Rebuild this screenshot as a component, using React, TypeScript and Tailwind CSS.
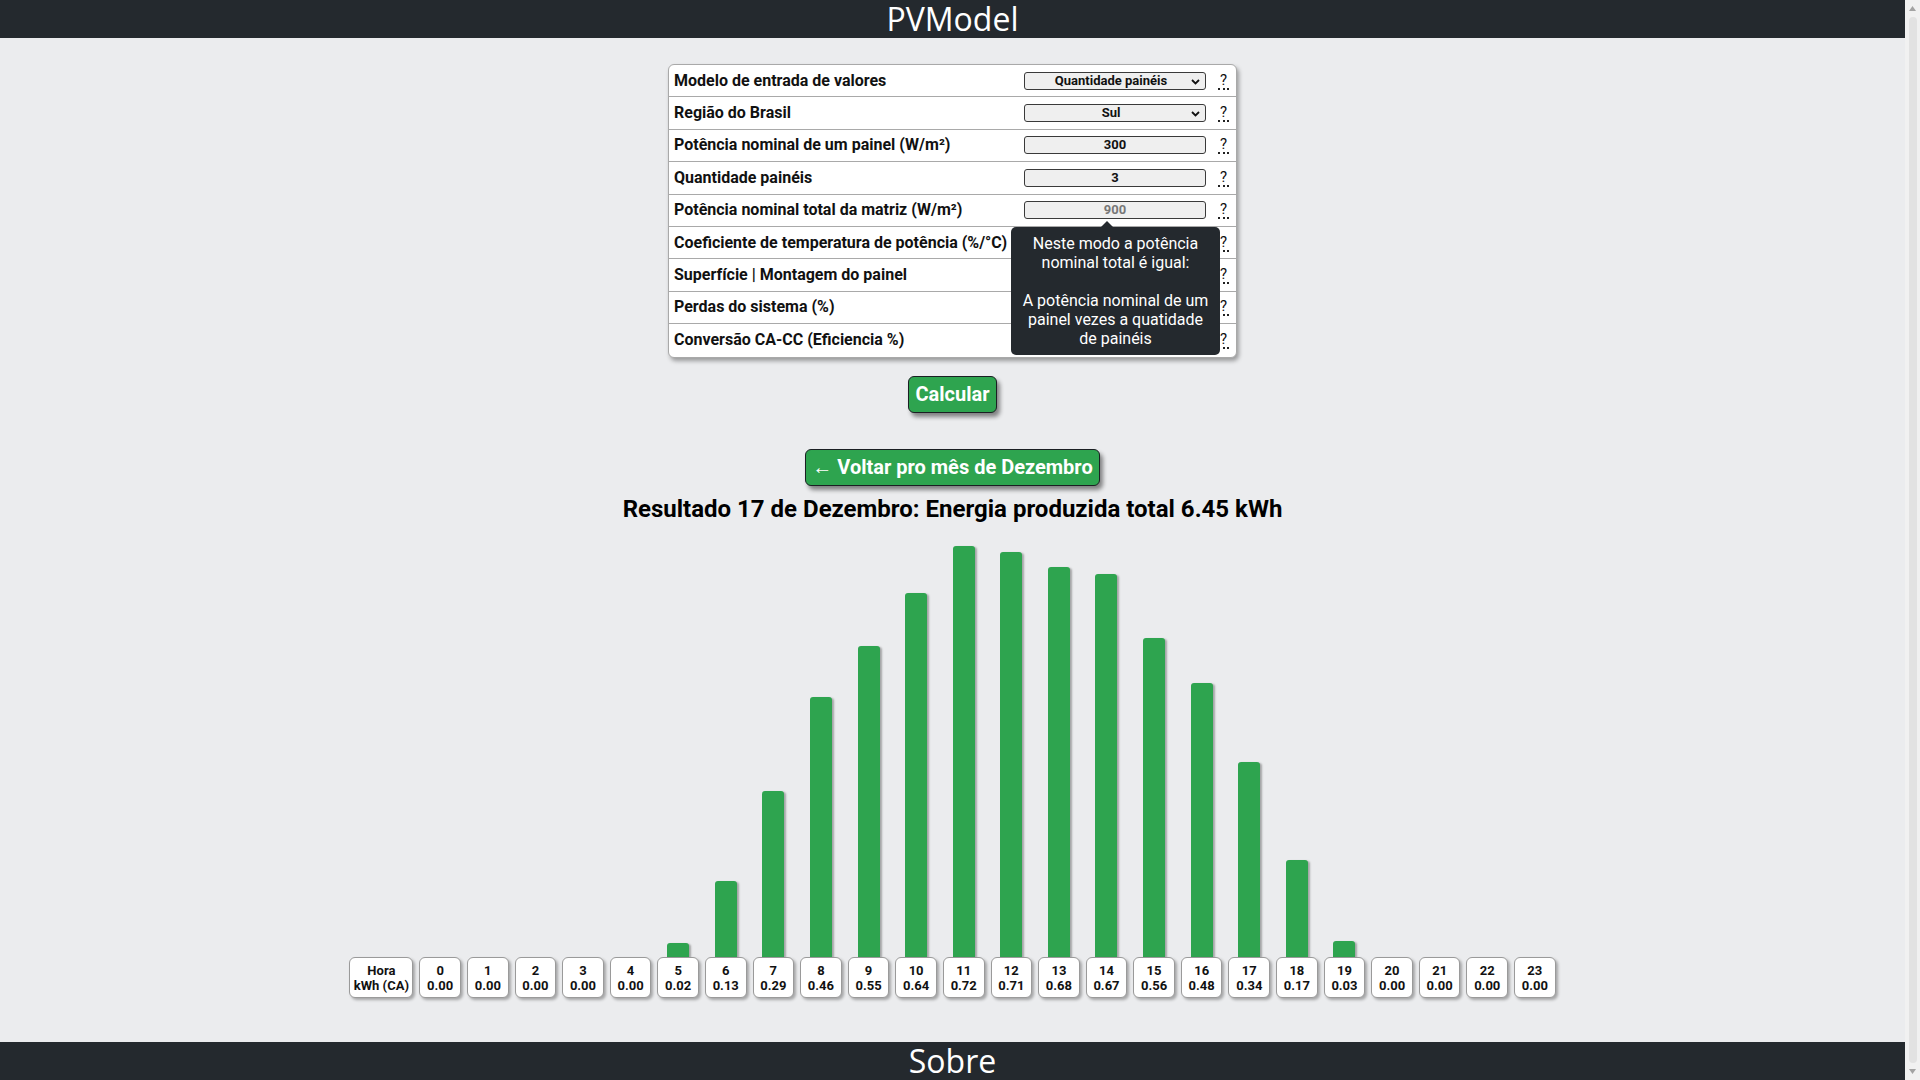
import React from "react";

const rows = [
  { label: "Modelo de entrada de valores", kind: "select", value: "Quantidade painéis" },
  { label: "Região do Brasil", kind: "select", value: "Sul" },
  { label: "Potência nominal de um painel (W/m²)", kind: "input", value: "300" },
  { label: "Quantidade painéis", kind: "input", value: "3" },
  { label: "Potência nominal total da matriz (W/m²)", kind: "disabled", value: "900" },
  { label: "Coeficiente de temperatura de potência (%/°C)", kind: "none", value: "" },
  { label: "Superfície | Montagem do painel", kind: "none", value: "" },
  { label: "Perdas do sistema (%)", kind: "none", value: "" },
  { label: "Conversão CA-CC (Eficiencia %)", kind: "none", value: "" },
];

const values = [
  "0.00", "0.00", "0.00", "0.00", "0.00", "0.02", "0.13", "0.29", "0.46", "0.55", "0.64", "0.72",
  "0.71", "0.68", "0.67", "0.56", "0.48", "0.34", "0.17", "0.03", "0.00", "0.00", "0.00", "0.00",
];
const heights = [0, 0, 0, 0, 0, 14, 76, 166, 260, 311, 364, 411, 405, 390, 383, 319, 274, 195, 97, 16, 0, 0, 0, 0];

function Chevron() {
  return (
    <svg width="9" height="6" viewBox="0 0 9 6" className="absolute right-[5px] top-[6px]">
      <path d="M1 1 L4.5 4.5 L8 1" fill="none" stroke="#111" strokeWidth="1.8" />
    </svg>
  );
}

function Field({ kind, value }: { kind: string; value: string }) {
  if (kind === "none") return <div className="w-[182px]" />;
  return (
    <div className="relative w-[182px] h-[18px] rounded-[3px] border border-[#3a3a3a] bg-[#efefef] flex items-center justify-center">
      <span
        className={
          "text-[13px] font-bold leading-[14px] " +
          (kind === "disabled" ? "text-[#777]" : "text-[#111]") +
          (kind === "select" ? " pr-[8px]" : "")
        }
      >
        {value}
      </span>
      {kind === "select" && <Chevron />}
    </div>
  );
}

function ScrollBar() {
  return (
    <div className="fixed top-0 right-0 h-screen w-[15px] bg-[#f1f1f1] flex flex-col items-center">
      <div className="h-[17px] w-full flex items-center justify-center">
        <svg width="7" height="5" viewBox="0 0 7 5">
          <path d="M3.5 0 L7 5 L0 5 Z" fill="#a3a3a3" />
        </svg>
      </div>
      <div className="flex-1 w-[8px] rounded-[4px] bg-[#e2e2e2]" />
      <div className="h-[17px] w-full flex items-center justify-center">
        <svg width="7" height="5" viewBox="0 0 7 5">
          <path d="M0 0 L7 0 L3.5 5 Z" fill="#a3a3a3" />
        </svg>
      </div>
    </div>
  );
}

export default function App() {
  return (
    <div className="min-h-[1090px] bg-[#ebecee] text-black" style={{ fontFamily: "Roboto, 'Liberation Sans', sans-serif" }}>
      <div className="mr-[15px]">
        <header className="h-[38px] bg-[#24292e] flex items-center justify-center">
          <span className="text-white text-[32px] leading-[38px]" style={{ fontFamily: "'Open Sans', sans-serif" }}>
            PVModel
          </span>
        </header>

        <main className="flex flex-col items-center pt-[26px]">
          <div className="relative w-[569px] bg-white border border-[#a9a9a9] rounded-[6px] shadow-[2px_3px_4px_rgba(0,0,0,0.35)]">
            {rows.map((r, i) => (
              <div
                key={i}
                className={
                  "flex items-center h-[32.4px] " + (i < rows.length - 1 ? "border-b border-[#a9a9a9]" : "")
                }
              >
                <div className="flex-1 pl-[5px] text-[16px] font-bold leading-[20px] text-[#111] whitespace-nowrap">
                  {r.label}
                </div>
                <Field kind={r.kind} value={r.value} />
                <span className="ml-[12px] mr-[7px] w-[11px] text-center text-[15px] leading-[16px] text-[#111] border-b-2 border-dotted border-[#222]">
                  ?
                </span>
              </div>
            ))}

            <div className="absolute left-[342px] top-[162px] w-[209px]">
              <div className="absolute left-[89px] -top-[6px] w-0 h-0 border-l-[7px] border-r-[7px] border-b-[7px] border-l-transparent border-r-transparent border-b-[#24292e]" />
              <div className="bg-[#24292e] rounded-[5px] px-[5px] py-[7px] text-white text-[16px] leading-[19px] text-center">
                <div>Neste modo a potência</div>
                <div>nominal total é igual:</div>
                <div className="h-[19px]" />
                <div>A potência nominal de um</div>
                <div>painel vezes a quatidade</div>
                <div>de painéis</div>
              </div>
            </div>
          </div>

          <button className="mt-[18px] h-[37px] px-[6px] rounded-[6px] border border-[#1b1f23] bg-[#2ea44f] text-white text-[20px] font-bold leading-[24px] shadow-[3px_4px_4px_rgba(0,0,0,0.45)]">
            Calcular
          </button>

          <button className="mt-[36px] h-[37px] px-[6px] rounded-[6px] border border-[#1b1f23] bg-[#2ea44f] text-white text-[20px] font-bold leading-[24px] shadow-[3px_4px_4px_rgba(0,0,0,0.45)]">
            ← Voltar pro mês de Dezembro
          </button>

          <h2 className="mt-[8px] text-[24px] font-bold leading-[30px] text-black">
            Resultado 17 de Dezembro: Energia produzida total 6.45 kWh
          </h2>

          <div className="flex gap-[6px] items-end">
            <div className="flex flex-col">
              <div className="h-[433px]" />
              <div className="w-[64px] h-[41px] rounded-[6px] border border-[#9a9a9a] bg-white shadow-[2px_2px_3px_rgba(0,0,0,0.3)] flex flex-col items-center justify-center pt-[1px] text-[13px] font-bold leading-[15px] text-[#111]">
                <span>Hora</span>
                <span>kWh (CA)</span>
              </div>
            </div>
            {values.map((v, i) => (
              <div key={i} className="flex flex-col items-center">
                <div className="h-[433px] flex items-end justify-center">
                  {heights[i] > 0 && (
                    <div
                      className="w-[22px] bg-[#2ea44f] rounded-t-[3px] shadow-[2px_1px_2px_rgba(0,0,0,0.3)]"
                      style={{ height: heights[i] }}
                    />
                  )}
                </div>
                <div className="w-[41.6px] h-[41px] rounded-[6px] border border-[#9a9a9a] bg-white shadow-[2px_2px_3px_rgba(0,0,0,0.3)] flex flex-col items-center justify-center pt-[1px] text-[13px] font-bold leading-[15px] text-[#111]">
                  <span>{i}</span>
                  <span>{v}</span>
                </div>
              </div>
            ))}
          </div>
        </main>

        <footer className="mt-[44px] h-[48px] bg-[#24292e] flex justify-center">
          <span className="text-white text-[32px] leading-[38px]" style={{ fontFamily: "'Open Sans', sans-serif" }}>
            Sobre
          </span>
        </footer>
      </div>
      <ScrollBar />
    </div>
  );
}
